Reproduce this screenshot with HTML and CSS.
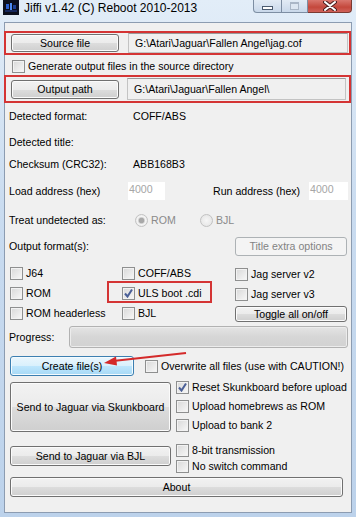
FILE: index.html
```html
<!DOCTYPE html>
<html lang="en">
<head>
    <meta charset="UTF-8">
    <title>Jiffi v1.42</title>
    <link rel="stylesheet" href="styles.css">
</head>
<body>
    <div class="window">
        <div class="titlebar">
            <svg class="app-icon" viewBox="0 0 16 15" width="16" height="15">
                <rect width="16" height="15" fill="#0b0f1e"/>
                <rect x="3" y="4" width="3" height="5" fill="#2a5fd0"/>
                <rect x="7" y="3" width="2" height="7" fill="#4f8cf0"/>
                <rect x="10" y="5" width="3" height="4" fill="#1d3f95"/>
                <rect x="2" y="10" width="12" height="2" fill="#16285e"/>
            </svg>
            <span class="title">Jiffi v1.42 (C) Reboot 2010-2013</span>
            <div class="caption-btns">
                <span class="cap cap-min"><span class="glyph-min"></span></span>
                <span class="cap cap-max"><span class="glyph-max"></span></span>
                <span class="cap cap-close">
                    <svg viewBox="0 0 14 10" width="14" height="10">
                        <path d="M2 1 L12 9 M12 1 L2 9" stroke="#4b2020" stroke-width="4" stroke-linecap="round"/>
                        <path d="M2 1 L12 9 M12 1 L2 9" stroke="#fff" stroke-width="2" stroke-linecap="round"/>
                    </svg>
                </span>
            </div>
        </div>

        <div class="client">
            <div class="mark mark-src">
                <button class="btn btn-path">Source file</button>
                <div class="textbox tb-src">G:\Atari\Jaguar\Fallen Angel\jag.cof</div>
            </div>

            <div class="gen-row">
                <label class="chk"><span class="box"></span>Generate output files in the source directory</label>
            </div>

            <div class="mark mark-out">
                <button class="btn btn-path btn-out">Output path</button>
                <div class="textbox tb-out">G:\Atari\Jaguar\Fallen Angel\</div>
            </div>

            <div class="info info-1"><span class="lbl">Detected format:</span><span>COFF/ABS</span></div>
            <div class="info info-2"><span class="lbl">Detected title:</span></div>
            <div class="info info-3"><span class="lbl">Checksum (CRC32):</span><span>ABB168B3</span></div>

            <div class="info addr-row">
                <span class="lbl lbl-load">Load address (hex)</span>
                <span class="addr addr-load">4000</span>
                <span class="lbl lbl-run">Run address (hex)</span>
                <span class="addr addr-run">4000</span>
            </div>

            <div class="info treat-row">
                <span class="lbl lbl-treat">Treat undetected as:</span>
                <span class="radio radio-rom"><span class="dot on"></span>ROM</span>
                <span class="radio"><span class="dot"></span>BJL</span>
            </div>

            <div class="info out-row">
                <span class="lbl">Output format(s):</span>
                <button class="btn btn-off btn-side">Title extra options</button>
            </div>

            <div class="grid">
                <div class="col col-1">
                    <label class="chk"><span class="box"></span>J64</label>
                    <label class="chk"><span class="box"></span>ROM</label>
                    <label class="chk"><span class="box"></span>ROM headerless</label>
                </div>
                <div class="col col-2">
                    <label class="chk"><span class="box"></span>COFF/ABS</label>
                    <label class="chk"><span class="box checked"></span>ULS boot .cdi</label>
                    <label class="chk"><span class="box"></span>BJL</label>
                </div>
                <div class="col col-3">
                    <label class="chk"><span class="box"></span>Jag server v2</label>
                    <label class="chk"><span class="box"></span>Jag server v3</label>
                    <button class="btn btn-side btn-toggle">Toggle all on/off</button>
                </div>
                <div class="mark-uls"></div>
            </div>

            <div class="info progress-row">
                <span class="lbl lbl-progress">Progress:</span>
                <div class="progress"></div>
            </div>

            <div class="create-row">
                <button class="btn btn-hot btn-create">Create file(s)</button>
                <label class="chk chk-over"><span class="box"></span>Overwrite all files (use with CAUTION!)</label>
                <svg class="arrow" viewBox="0 0 100 25" width="100" height="25">
                    <path d="M91 8 L18 16" stroke="#d42a2a" stroke-width="2" fill="none"/>
                    <path d="M9 18 L21 11.5 L22 20.5 Z" fill="#d42a2a"/>
                </svg>
            </div>

            <div class="send-row skunk-row">
                <button class="btn btn-send btn-skunk">Send to Jaguar via Skunkboard</button>
                <div class="opts opts-skunk">
                    <label class="chk"><span class="box checked"></span>Reset Skunkboard before upload</label>
                    <label class="chk"><span class="box"></span>Upload homebrews as ROM</label>
                    <label class="chk"><span class="box"></span>Upload to bank 2</label>
                </div>
            </div>

            <div class="send-row bjl-row">
                <button class="btn btn-send btn-bjl">Send to Jaguar via BJL</button>
                <div class="opts opts-bjl">
                    <label class="chk"><span class="box"></span>8-bit transmission</label>
                    <label class="chk"><span class="box"></span>No switch command</label>
                </div>
            </div>

            <div class="about-row">
                <button class="btn btn-about">About</button>
            </div>
        </div>
    </div>
</body>
</html>
```

FILE: styles.css
```css
* {
    box-sizing: border-box;
}

body {
    margin: 0;
    font-family: "Liberation Sans", Arial, sans-serif;
    font-size: 10.6px;
    color: #000;
}

.window {
    width: 356px;
    height: 517px;
    display: flex;
    flex-direction: column;
    background: linear-gradient(#e2edf8, #cadcf0 40%, #bcd2eb);
}

/* title bar */
.titlebar {
    height: 22px;
    display: flex;
    align-items: flex-start;
}

.app-icon {
    margin: 0 0 0 3px;
    flex: none;
}

.title {
    margin-left: 5px;
    font-size: 12px;
    line-height: 16px;
    color: #000;
}

.caption-btns {
    margin-left: auto;
    margin-right: 4px;
    display: flex;
    height: 13px;
}

.cap {
    display: flex;
    align-items: center;
    justify-content: center;
    height: 13px;
    border: 1px solid #7d8ea3;
    border-top: none;
}

.cap-min {
    width: 29px;
    border-radius: 0 0 0 4px;
    background: linear-gradient(#e2ebf5, #c9d8ea);
}

.cap-max {
    width: 26px;
    border-left: none;
    background: linear-gradient(#e2ebf5, #c9d8ea);
}

.cap-close {
    width: 44px;
    border-left: none;
    border-color: #7a3a32;
    border-radius: 0 0 4px 0;
    background: linear-gradient(#d9776e, #c4483c 60%, #d0625a);
}

.glyph-min {
    width: 11px;
    height: 4px;
    border: 1px solid #4b5b70;
    background: #fff;
    margin-top: 3px;
}

.glyph-max {
    width: 9px;
    height: 8px;
    border: 1px solid #aab6c6;
    border-top-width: 2px;
    background: #dde6f1;
}

/* client area */
.client {
    flex: 1;
    margin: 0 4px 4px 4px;
    background: #f0f0f0;
    border: 1px solid #8c9cb1;
}

.mark {
    display: flex;
    align-items: center;
    border: 2px solid #d43434;
    margin-left: -1px;
    width: 347px;
    padding-left: 5px;
}

.mark-src {
    margin-top: 8px;
    height: 24px;
}

.mark-out {
    margin-top: 2px;
    height: 28px;
}

/* buttons */
.btn {
    font: inherit;
    color: #000;
    padding: 0;
    border: 1px solid #707070;
    border-radius: 3px;
    background: linear-gradient(#f2f2f2, #ebebeb 50%, #dddddd 50%, #cfcfcf);
    box-shadow: inset 0 0 0 1px #fbfbfb;
    text-align: center;
}

.btn-hot {
    border-color: #3c7fb1;
    background: linear-gradient(#eaf6fd, #d9f0fc 50%, #bee6fd 50%, #a7d9f5);
    box-shadow: inset 0 0 0 1px #f4fbfe;
}

.btn-off {
    color: #838383;
    border-color: #adb2b5;
    background: #f4f4f4;
    box-shadow: none;
}

.btn-path {
    width: 108px;
    height: 18px;
    flex: none;
}

.btn-out {
    height: 19px;
}

.textbox {
    background: #f0f0f0;
    border: 1px solid #c3c3c3;
    border-top-color: #9a9a9a;
    padding-left: 6px;
    display: flex;
    align-items: center;
}

.tb-src {
    margin-left: 9px;
    width: 220px;
    height: 20px;
}

.tb-out {
    margin-left: 8px;
    width: 219px;
    height: 22px;
}

/* checkboxes and radios */
.chk {
    display: flex;
    align-items: center;
    gap: 3px;
    height: 14px;
    white-space: nowrap;
}

.box {
    width: 13px;
    height: 13px;
    flex: none;
    border: 1px solid #8e8f8f;
    background: linear-gradient(135deg, #d8d8d8, #f8f8f8);
    box-shadow: inset 0 0 0 1px #f2f2f2;
}

.box.checked {
    background:
        url("data:image/svg+xml,%3Csvg xmlns='http://www.w3.org/2000/svg' width='11' height='11'%3E%3Cpath d='M2 5.5 L4.5 8.5 L9 1.5' stroke='%234a5f97' stroke-width='2' fill='none'/%3E%3C/svg%3E") center / 11px 11px no-repeat,
        linear-gradient(135deg, #d8d8d8, #f8f8f8);
}

.gen-row {
    margin-top: 4px;
    padding-left: 7px;
    height: 14px;
}

.radio {
    display: flex;
    align-items: center;
    gap: 3px;
    color: #8a8a8a;
}

.radio-rom {
    width: 65px;
}

.dot {
    width: 13px;
    height: 13px;
    border-radius: 50%;
    border: 1px solid #c2c2c2;
    background: radial-gradient(circle, #f6f6f6, #e2e2e2);
}

.dot.on {
    background: radial-gradient(circle, #a8a8a8 0 2.5px, #d0d0d0 3px, #f4f4f4 4px, #e4e4e4);
}

/* info rows */
.info {
    display: flex;
    align-items: center;
    padding-left: 4px;
    height: 14px;
}

.lbl {
    width: 124px;
    flex: none;
}

.info-1 { margin-top: 6px; }
.info-2 { margin-top: 12px; }
.info-3 { margin-top: 8px; }

.addr-row {
    margin-top: 11px;
    height: 18px;
}

.lbl-load {
    width: 119px;
}

.lbl-run {
    margin-left: 48px;
    width: 96px;
}

.addr {
    height: 18px;
    background: #fff;
    color: #a6a6a6;
    padding: 1px 0 0 1px;
}

.addr-load { width: 37px; }
.addr-run { width: 39px; }

.treat-row {
    margin-top: 13px;
}

.lbl-treat {
    width: 126px;
}

.out-row {
    margin-top: 9px;
    height: 20px;
    padding-right: 4px;
}

.btn-side {
    margin-left: auto;
    width: 112px;
    height: 19px;
}

/* output formats */
.grid {
    position: relative;
    margin-top: 10px;
    display: flex;
}

.col {
    display: flex;
    flex-direction: column;
    gap: 6px;
}

.col-1 {
    width: 117px;
    padding-left: 5px;
}

.col-2 {
    width: 113px;
}

.col-3 {
    margin-top: 1px;
}

.btn-toggle {
    margin-top: -1px;
    height: 16px;
}

.mark-uls {
    position: absolute;
    left: 102px;
    top: 15px;
    width: 105px;
    height: 22px;
    border: 2px solid #d43434;
}

.progress-row {
    margin-top: 4px;
    height: 22px;
}

.lbl-progress {
    width: 60px;
}

.progress {
    width: 279px;
    height: 22px;
    border: 1px solid #b2b2b2;
    border-radius: 3px;
    background: linear-gradient(#e4e4e4, #d6d6d6 50%, #d2d2d2);
    box-shadow: inset 0 0 0 1px #ececec;
}

/* actions */
.create-row {
    position: relative;
    margin-top: 8px;
    padding-left: 5px;
    display: flex;
    align-items: center;
    height: 20px;
}

.btn-create {
    width: 124px;
    height: 20px;
}

.chk-over {
    margin-left: 11px;
}

.arrow {
    position: absolute;
    left: 90px;
    top: -11px;
}

.send-row {
    display: flex;
    align-items: flex-start;
    padding-left: 5px;
}

.btn-send {
    width: 161px;
    flex: none;
}

.opts {
    display: flex;
    flex-direction: column;
    margin-left: 5px;
}

.skunk-row {
    margin-top: 6px;
}

.btn-skunk {
    height: 50px;
}

.opts-skunk {
    margin-top: -2px;
    gap: 5px;
}

.bjl-row {
    margin-top: 11px;
}

.btn-bjl {
    margin-top: 3px;
    height: 20px;
}

.opts-bjl {
    gap: 2px;
}

.about-row {
    margin-top: 4px;
    padding-left: 5px;
}

.btn-about {
    width: 333px;
    height: 20px;
}
```
